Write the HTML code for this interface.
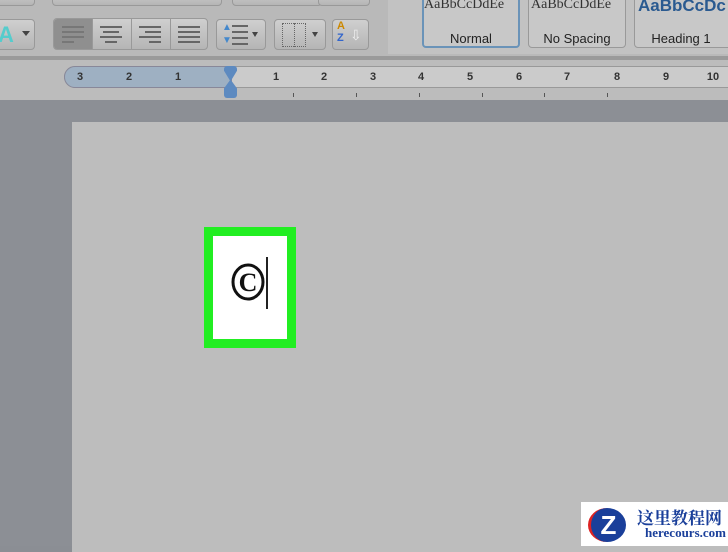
<!DOCTYPE html><html><head><style>
body{margin:0;width:728px;height:546px;overflow:hidden;background:#8b8e94;font-family:"Liberation Sans",sans-serif;position:relative}
div{position:absolute;box-sizing:border-box}
.btn{background:linear-gradient(#cfcfcf,#b5b5b5);border:1px solid #999;border-radius:4px}
.l{background:#666;height:2px}
.num{font-size:11px;font-weight:bold;color:#333;top:71px;width:14px;text-align:center;margin-left:-7px}
.tk{width:1px;height:4px;background:#555;top:76px}
</style></head><body>
<div style="left:0;top:0;width:728px;height:58px;background:#b9b9b9"></div>
<div class="btn" style="left:-10px;top:-10px;width:45px;height:16px"></div>
<div class="btn" style="left:52px;top:-10px;width:170px;height:16px"></div>
<div class="btn" style="left:232px;top:-10px;width:90px;height:16px"></div>
<div class="btn" style="left:318px;top:-10px;width:52px;height:16px"></div>
<div class="btn" style="left:-10px;top:19px;width:45px;height:31px"></div>
<div style="left:-2px;top:22px;color:#5cc;font-size:22px;font-weight:bold">A</div>
<div style="left:22px;top:31px;width:0;height:0;border:4px solid transparent;border-top:5px solid #444"></div>
<div class="btn" style="left:53px;top:18px;width:155px;height:32px"></div>
<div style="left:54px;top:19px;width:38px;height:30px;background:#8f8f8f;border-radius:3px 0 0 3px"></div>
<div style="left:92px;top:19px;width:1px;height:30px;background:#999"></div>
<div style="left:131px;top:19px;width:1px;height:30px;background:#999"></div>
<div style="left:170px;top:19px;width:1px;height:30px;background:#999"></div>
<div class="l" style="left:62px;top:26px;width:22px;background:#777"></div><div class="l" style="left:62px;top:31px;width:22px;background:#777"></div><div class="l" style="left:62px;top:36px;width:22px;background:#777"></div><div class="l" style="left:62px;top:41px;width:12px;background:#777"></div>
<div class="l" style="left:100px;top:26px;width:22px"></div><div class="l" style="left:103px;top:31px;width:16px"></div><div class="l" style="left:100px;top:36px;width:22px"></div><div class="l" style="left:105px;top:41px;width:12px"></div>
<div class="l" style="left:139px;top:26px;width:22px"></div><div class="l" style="left:145px;top:31px;width:16px"></div><div class="l" style="left:139px;top:36px;width:22px"></div><div class="l" style="left:149px;top:41px;width:12px"></div>
<div class="l" style="left:178px;top:26px;width:22px"></div><div class="l" style="left:178px;top:31px;width:22px"></div><div class="l" style="left:178px;top:36px;width:22px"></div><div class="l" style="left:178px;top:41px;width:22px"></div>
<div class="btn" style="left:216px;top:19px;width:50px;height:31px"></div>
<div style="left:222px;top:22px;color:#48c;font-size:10px">▲</div><div style="left:222px;top:35px;color:#48c;font-size:10px">▼</div>
<div class="l" style="left:232px;top:25px;width:16px"></div><div class="l" style="left:232px;top:31px;width:16px"></div><div class="l" style="left:232px;top:37px;width:16px"></div><div class="l" style="left:232px;top:43px;width:16px"></div>
<div style="left:252px;top:32px;border:3px solid transparent;border-top:5px solid #444;width:0;height:0"></div>
<div class="btn" style="left:274px;top:19px;width:52px;height:31px"></div>
<div style="left:282px;top:23px;width:24px;height:24px;border:1px dotted #666"></div><div style="left:294px;top:23px;width:1px;height:24px;border-left:1px dotted #666"></div>
<div style="left:312px;top:32px;border:3px solid transparent;border-top:5px solid #444;width:0;height:0"></div>
<div class="btn" style="left:332px;top:19px;width:37px;height:31px"></div>
<div style="left:337px;top:20px;color:#c80;font-size:11px;font-weight:bold">A</div>
<div style="left:337px;top:32px;color:#36c;font-size:11px;font-weight:bold">Z</div>
<div style="left:350px;top:27px;color:#eee;font-size:14px">⇩</div>
<div style="left:388px;top:0;width:340px;height:54px;background:#c2c2c2"></div>
<div class="btn" style="left:422px;top:-6px;width:98px;height:54px;border:2px solid #6a93b8;background:#c8c8c8"></div>
<div class="btn" style="left:528px;top:-6px;width:98px;height:54px;background:#c8c8c8"></div>
<div class="btn" style="left:634px;top:-6px;width:100px;height:54px;background:#c8c8c8"></div>
<div style="left:424px;top:-3px;font-family:'Liberation Serif',serif;font-size:14px;color:#333">AaBbCcDdEe</div>
<div style="left:531px;top:-3px;font-family:'Liberation Serif',serif;font-size:14px;color:#333">AaBbCcDdEe</div>
<div style="left:638px;top:-4px;font-size:17px;font-weight:bold;color:#2a5a90">AaBbCcDc</div>
<div style="left:422px;top:31px;width:98px;text-align:center;font-size:13px;color:#222">Normal</div>
<div style="left:528px;top:31px;width:98px;text-align:center;font-size:13px;color:#222">No Spacing</div>
<div style="left:634px;top:31px;width:94px;text-align:center;font-size:13px;color:#222">Heading 1</div>
<div style="left:0;top:56px;width:728px;height:4px;background:#9a9a9a"></div>
<div style="left:0;top:60px;width:728px;height:40px;background:#bcbcbc"></div>
<div style="left:64px;top:66px;width:680px;height:22px;border-radius:11px;background:#cbcbcb;border:1px solid #999"></div>
<div style="left:64px;top:66px;width:168px;height:22px;border-radius:11px 0 0 11px;background:#9eb0c2;border:1px solid #889"></div>
<div class="num" style="left:80px">3</div><div class="num" style="left:129px">2</div><div class="num" style="left:178px">1</div>
<div class="num" style="left:276px">1</div><div class="num" style="left:324px">2</div><div class="num" style="left:373px">3</div>
<div class="num" style="left:421px">4</div><div class="num" style="left:470px">5</div><div class="num" style="left:519px">6</div>
<div class="num" style="left:567px">7</div><div class="num" style="left:617px">8</div><div class="num" style="left:666px">9</div>
<div class="num" style="left:713px">10</div>
<div style="left:224px;top:66px;width:13px;height:32px;background:#5d8ac0;border-radius:3px;clip-path:polygon(0 0,100% 0,100% 15%,55% 45%,100% 70%,100% 100%,0 100%,0 70%,45% 45%,0 15%)"></div>
<div class="tk" style="left:293px;top:93px"></div><div class="tk" style="left:356px;top:93px"></div><div class="tk" style="left:419px;top:93px"></div><div class="tk" style="left:482px;top:93px"></div><div class="tk" style="left:544px;top:93px"></div><div class="tk" style="left:607px;top:93px"></div>
<div style="left:0;top:100px;width:728px;height:446px;background:#8c8f95"></div>
<div style="left:72px;top:122px;width:660px;height:430px;background:#bdbdbd"></div>
<div style="left:204px;top:227px;width:92px;height:121px;border:9px solid #22ee22;background:#fff"></div>
<svg style="position:absolute;left:230px;top:263px" width="36" height="40"><ellipse cx="18" cy="19" rx="15" ry="17" fill="none" stroke="#111" stroke-width="3"/><text x="18" y="28" text-anchor="middle" font-family="Liberation Serif" font-weight="bold" font-size="26" fill="#111">C</text></svg>
<div style="left:266px;top:257px;width:2px;height:52px;background:#222"></div>
<div style="left:581px;top:502px;width:147px;height:44px;background:#fff"></div>
<div style="left:588px;top:508px;width:38px;height:34px;border-radius:50%;background:#1a3f9a;color:#fff;font-weight:bold;font-size:26px;text-align:center;line-height:34px;border-left:3px solid #d22">Z</div>
<div style="left:637px;top:504px;font-family:'Noto Serif CJK SC',serif;font-weight:bold;font-size:17px;color:#1a3f9a">这里教程网</div>
<div style="left:645px;top:525px;font-family:'Liberation Serif',serif;font-weight:bold;font-size:13px;color:#1a3f9a">herecours.com</div>
</body></html>
